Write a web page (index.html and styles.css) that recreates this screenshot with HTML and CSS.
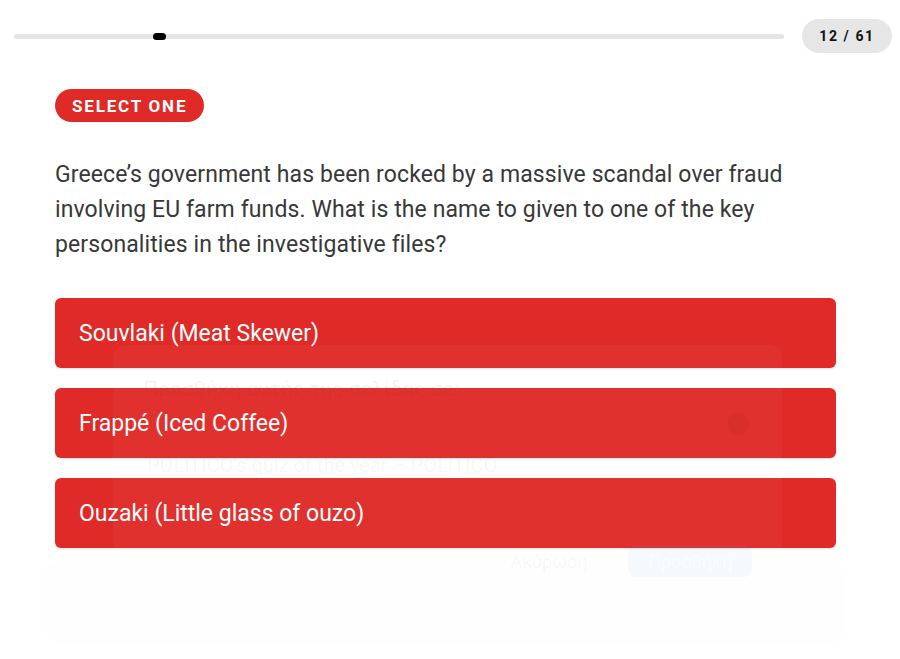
FILE: index.html
```html
<!DOCTYPE html>
<html lang="en">
<head>
<meta charset="utf-8">
<title>Quiz</title>
<link rel="stylesheet" href="styles.css">
</head>
<body>
<div class="page">
  <header class="topbar">
    <div class="progress"><span class="progress-dot"></span></div>
    <div class="counter">12 / 61</div>
  </header>
  <main class="quiz">
    <div class="tag">SELECT ONE</div>
    <p class="question">Greece’s government has been rocked by a massive scandal over fraud involving EU farm funds. What is the name to given to one of the key personalities in the investigative files?</p>
    <div class="options">
      <button class="option">Souvlaki (Meat Skewer)</button>
      <button class="option">Frappé (Iced Coffee)</button>
      <button class="option">Ouzaki (Little glass of ouzo)</button>
    </div>
  </main>
  <div class="ghost-panel"></div>
  <div class="ghost-dialog">
    <div class="ghost-title">Προσθήκη αυτής της σελίδας σε:</div>
    <div class="ghost-row">
      <span class="ghost-name">POLITICO's quiz of the year – POLITICO</span>
      <span class="ghost-icon"></span>
    </div>
    <div class="ghost-actions">
      <span class="ghost-btn">Ακύρωση</span>
      <span class="ghost-btn primary">Προσθήκη</span>
    </div>
  </div>
</div>
</body>
</html>
```
FILE: styles.css
```css
* { box-sizing: border-box; }
html, body { margin: 0; padding: 0; background: #ffffff; }
body { font-family: Roboto, "Noto Sans", "Liberation Sans", sans-serif; color: #333; }
.page { position: relative; width: 900px; height: 659px; overflow: hidden; }

.topbar { display: flex; align-items: center; gap: 18px; padding: 19px 8px 0 14px; }
.progress { position: relative; flex: 1; height: 5px; border-radius: 3px; background: #e4e4e4; }
.progress-dot { position: absolute; left: 139px; top: -1px; width: 13px; height: 7px; border-radius: 4px; background: #000; }
.counter { width: 90px; height: 34px; border-radius: 17px; background: #e6e6e6; display: flex; align-items: center; justify-content: center; font-size: 14px; font-weight: 700; letter-spacing: 1.6px; color: #111; }

.quiz { padding: 36px 64px 0 55px; }
.tag { display: inline-flex; align-items: center; height: 33px; padding: 0 17px; border-radius: 17px; background: #df2a27; color: #fff; font-size: 17px; font-weight: 700; letter-spacing: 1.8px; }
.question { margin: 35px 0 0; font-size: 23px; letter-spacing: 0.1px; line-height: 35px; color: #383838; }
.options { display: flex; flex-direction: column; gap: 20px; margin-top: 36px; }
.option { display: flex; align-items: center; height: 70px; padding: 0 24px; border: 0; border-radius: 6px; background: #df2a27; color: #fff; font-family: Roboto, "Noto Sans", "Liberation Sans", sans-serif; font-size: 23px; text-align: left; box-shadow: 0 1px 2px rgba(0,0,0,0.12); }

.ghost-panel { position: absolute; left: 45px; top: 560px; width: 800px; height: 85px; border-radius: 14px; background: rgba(0,0,0,0.003); }
.ghost-dialog { position: absolute; left: 113px; top: 345px; width: 669px; height: 265px; border-radius: 12px; background: rgba(255,255,255,0.035); box-shadow: 0 0 20px rgba(0,0,0,0.008); padding: 32px 30px 0 30px; }
.ghost-title { font-size: 21px; color: rgba(60,60,60,0.06); }
.ghost-row { display: flex; align-items: flex-start; justify-content: space-between; margin-top: 12px; padding-right: 3px; }
.ghost-name { font-size: 20px; color: rgba(60,60,60,0.05); padding-left: 4px; margin-top: 40px; }
.ghost-icon { width: 22px; height: 22px; border-radius: 50%; background: rgba(0,0,0,0.03); }
.ghost-actions { display: flex; justify-content: flex-end; gap: 23px; margin-top: 68px; }
.ghost-btn { width: 112px; height: 32px; border-radius: 8px; display: flex; align-items: center; justify-content: center; font-size: 18px; color: rgba(60,60,60,0.05); }
.ghost-btn.primary { width: 124px; background: rgba(80,150,255,0.05); color: rgba(255,255,255,0.6); }
```
